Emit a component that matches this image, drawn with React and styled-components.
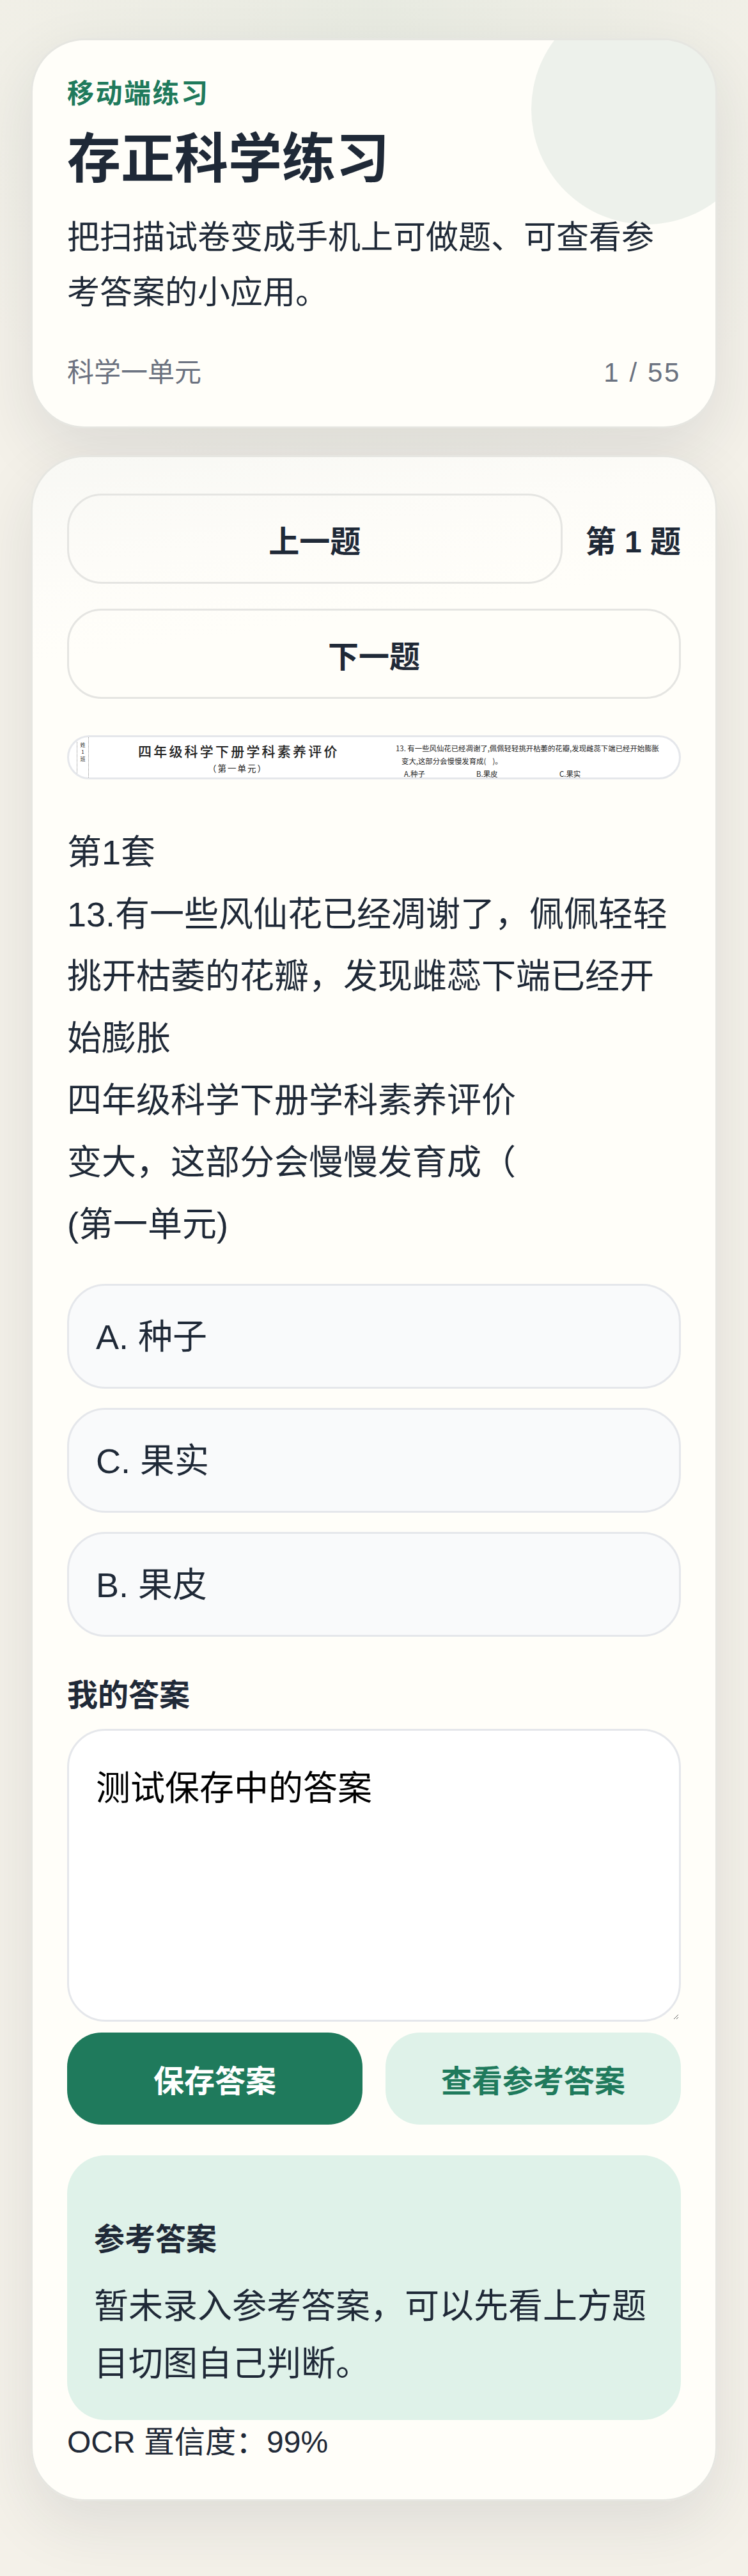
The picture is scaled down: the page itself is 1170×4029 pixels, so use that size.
import styled, { createGlobalStyle } from "styled-components"

const GlobalStyle = createGlobalStyle`
    * {
        box-sizing: border-box;
    }

    body {
        margin: 0;
        background: #f4f1e9;
        font-family: "Liberation Sans", "Noto Sans CJK SC", sans-serif;
        color: #1f2937;
    }
`

const options = ["A. 种子", "C. 果实", "B. 果皮"]

export default function App() {
    return (
        <Page>
            <GlobalStyle />

            <HeroCard>
                <Kicker>移动端练习</Kicker>
                <Title>存正科学练习</Title>
                <Intro>把扫描试卷变成手机上可做题、可查看参考答案的小应用。</Intro>
                <MetaRow>
                    <span>科学一单元</span>
                    <Progress>1 / 55</Progress>
                </MetaRow>
            </HeroCard>

            <QuestionCard>
                <NavRow>
                    <NavButton>上一题</NavButton>
                    <NavLabel>第 1 题</NavLabel>
                    <NavButton $full>下一题</NavButton>
                </NavRow>

                <ScanCrop>
                    <ScanMargin>
                        <span>姓</span>
                        <span>1</span>
                        <span>班</span>
                    </ScanMargin>
                    <ScanHead>
                        <strong>四年级科学下册学科素养评价</strong>
                        <span>{"\uFF08第一单元\uFF09"}</span>
                    </ScanHead>
                    <ScanQuestion>
                        <p>{"13. 有一些风仙花已经凋谢了,佩佩轻轻挑开枯萎的花瓣,发现雌蕊下端已经开始膨胀"}</p>
                        <p>{"变大,这部分会慢慢发育成(\u00A0\u00A0\u00A0\u00A0)。"}</p>
                        <ScanChoices>
                            <span>A.种子</span>
                            <span>B.果皮</span>
                            <span>C.果实</span>
                        </ScanChoices>
                    </ScanQuestion>
                </ScanCrop>

                <QuestionText>
                    <p>第1套</p>
                    <p>{"13.有一些风仙花已经凋谢了\uFF0C佩佩轻轻挑开枯萎的花瓣\uFF0C发现雌蕊下端已经开始膨胀"}</p>
                    <p>四年级科学下册学科素养评价</p>
                    <p>{"变大\uFF0C这部分会慢慢发育成\uFF08"}</p>
                    <p>(第一单元)</p>
                </QuestionText>

                <OptionList>
                    {options.map((option) => (
                        <OptionButton key={option}>{option}</OptionButton>
                    ))}
                </OptionList>

                <FieldLabel>我的答案</FieldLabel>
                <AnswerInput defaultValue="测试保存中的答案" />

                <ActionRow>
                    <ActionButton $primary>保存答案</ActionButton>
                    <ActionButton>查看参考答案</ActionButton>
                </ActionRow>

                <AnswerBox>
                    <h3>参考答案</h3>
                    <p>{"暂未录入参考答案\uFF0C可以先看上方题目切图自己判断。"}</p>
                </AnswerBox>

                <Confidence>{"OCR 置信度\uFF1A99%"}</Confidence>
            </QuestionCard>
        </Page>
    )
}

const Page = styled.div`
    width: 1170px;
    min-height: 4029px;
    padding: 60px 48px 120px;
    display: flex;
    flex-direction: column;
    gap: 42px;
    background:
        radial-gradient(circle at 50% 0, rgba(31, 122, 92, 0.06), transparent 800px),
        #f4f1e9;
`

const Card = styled.section`
    position: relative;
    overflow: hidden;
    background: #fffef9;
    border: 3px solid #e6e6e1;
    border-radius: 84px;
    padding: 54px;
    box-shadow: 0 36px 96px rgba(31, 41, 55, 0.1);
`

const HeroCard = styled(Card)`
    &::after {
        content: "";
        position: absolute;
        top: -72px;
        right: -72px;
        width: 360px;
        height: 360px;
        border-radius: 50%;
        background: rgba(31, 90, 80, 0.08);
    }
`

const Kicker = styled.div`
    font-size: 42px;
    line-height: 60px;
    font-weight: 700;
    letter-spacing: 2.5px;
    color: #1f7a5c;
`

const Title = styled.h1`
    margin: 16px 0 0;
    font-size: 84px;
    line-height: 112px;
    font-weight: 700;
    color: #1f2937;
`

const Intro = styled.p`
    position: relative;
    z-index: 1;
    margin: 24px 0 0;
    font-size: 51px;
    line-height: 86px;
`

const MetaRow = styled.div`
    display: flex;
    justify-content: space-between;
    margin-top: 52px;
    font-size: 42px;
    line-height: 60px;
    color: #6b7280;
`

const Progress = styled.span`
    letter-spacing: 2.6px;
`

const QuestionCard = styled(Card)`
    padding-top: 57px;
    background: linear-gradient(172deg, #f8f8f4 0, #fdfcf8 180px, #fffef9 320px);
`

const NavRow = styled.div`
    display: flex;
    flex-wrap: wrap;
    align-items: center;
    gap: 39px 36px;
`

const NavButton = styled.button`
    flex: ${(props) => (props.$full ? "0 0 100%" : "1")};
    height: 141px;
    background: transparent;
    border: 3px solid #e5e5e2;
    border-radius: 54px;
    font: 700 48px "Liberation Sans", "Noto Sans CJK SC", sans-serif;
    color: #1f2937;
`

const NavLabel = styled.span`
    font-size: 48px;
    font-weight: 700;
`

const ScanCrop = styled.div`
    display: flex;
    height: 69px;
    margin-top: 57px;
    overflow: hidden;
    background: #fff;
    border: 3px solid #e5e7eb;
    border-radius: 60px;
    font-family: "Noto Sans CJK SC", sans-serif;
    color: #222;
`

const ScanMargin = styled.div`
    width: 19px;
    margin-left: 12px;
    border-left: 1px dotted #888;
    border-right: 1px dotted #888;
    display: flex;
    flex-direction: column;
    align-items: center;
    gap: 3px;
    padding-top: 8px;
    font-size: 8px;
    line-height: 8px;
`

const ScanHead = styled.div`
    width: 480px;
    padding-left: 77px;
    padding-top: 5px;
    display: flex;
    flex-direction: column;

    strong {
        font-size: 21px;
        line-height: 32px;
        font-weight: 500;
        letter-spacing: 3.2px;
    }

    span {
        margin-left: 109px;
        font-size: 13.5px;
        line-height: 22px;
        letter-spacing: 2px;
    }
`

const ScanQuestion = styled.div`
    padding-top: 7px;
    font-size: 11.4px;
    line-height: 20px;
    white-space: nowrap;

    p {
        margin: 0;
    }

    p + p {
        padding-left: 9px;
    }
`

const ScanChoices = styled.div`
    display: flex;
    padding-left: 13px;

    span:first-child {
        width: 113px;
    }

    span:nth-child(2) {
        width: 130px;
    }
`

const QuestionText = styled.div`
    margin-top: 66px;
    font-size: 54px;
    line-height: 97px;

    p {
        margin: 0;
    }
`

const OptionList = styled.div`
    display: flex;
    flex-direction: column;
    gap: 30px;
    margin-top: 44px;
`

const OptionButton = styled.button`
    height: 164px;
    padding: 0 42px 8px;
    text-align: left;
    background: #f9fafb;
    border: 3px solid #e5e7eb;
    border-radius: 60px;
    font: 400 54px "Liberation Sans", "Noto Sans CJK SC", sans-serif;
    color: #1f2937;
`

const FieldLabel = styled.label`
    display: block;
    margin-top: 50px;
    font-size: 48px;
    line-height: 84px;
    font-weight: 700;
`

const AnswerInput = styled.textarea`
    display: block;
    width: 100%;
    height: 458px;
    margin-top: 10px;
    padding: 42px;
    background: #fff;
    border: 3px solid #e5e7eb;
    border-radius: 60px;
    outline: none;
    font: 400 54px/97px "Liberation Sans", "Noto Sans CJK SC", sans-serif;
    color: #000;
`

const ActionRow = styled.div`
    display: grid;
    grid-template-columns: 1fr 1fr;
    gap: 36px;
    margin-top: 17px;
`

const ActionButton = styled.button`
    height: 144px;
    border: none;
    border-radius: 54px;
    background: ${(props) => (props.$primary ? "#1f7a5c" : "#dff2e9")};
    color: ${(props) => (props.$primary ? "#fff" : "#1f7a5c")};
    font: 700 48px "Liberation Sans", "Noto Sans CJK SC", sans-serif;
`

const AnswerBox = styled.div`
    margin-top: 48px;
    padding: 102px 42px 43px;
    background: #dff2e9;
    border-radius: 60px;

    h3 {
        margin: 0;
        font-size: 48px;
        line-height: 60px;
        font-weight: 700;
    }

    p {
        margin: 29px 0 0;
        font-size: 54px;
        line-height: 90px;
    }
`

const Confidence = styled.div`
    font-size: 48px;
    line-height: 70px;
`
